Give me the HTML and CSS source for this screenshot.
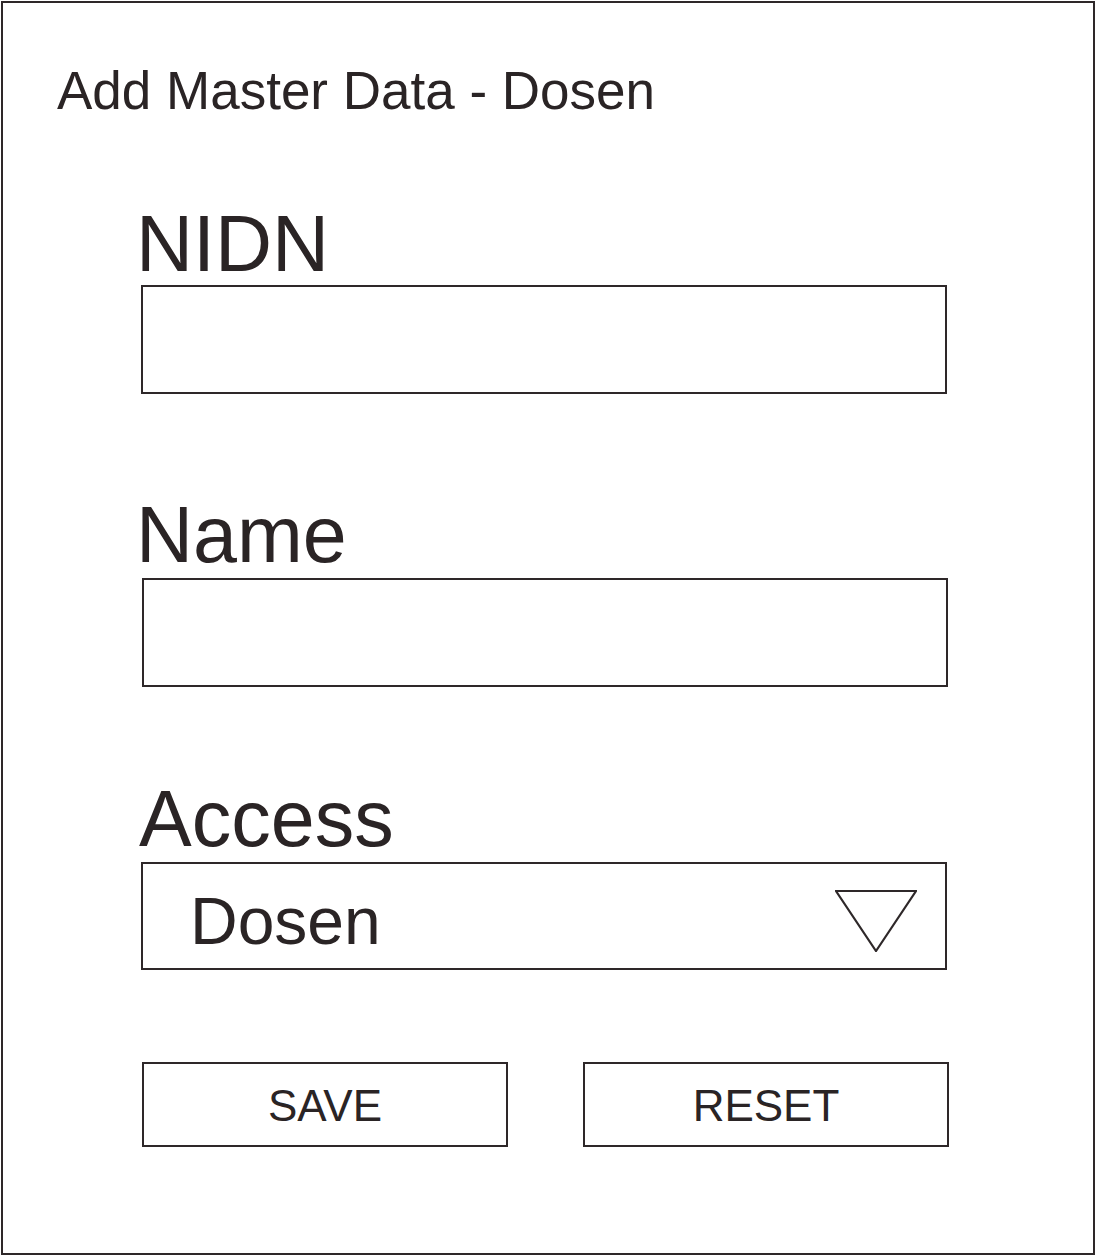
FILE: index.html
```html
<!DOCTYPE html>
<html lang="en">
<head>
<meta charset="utf-8">
<title>Add Master Data - Dosen</title>
<link rel="stylesheet" href="styles.css">
</head>
<body>
<div class="frame">
  <h1 class="title">Add Master Data - Dosen</h1>

  <div class="field field-nidn">
    <label class="label">NIDN</label>
    <div class="input"></div>
  </div>

  <div class="field field-name">
    <label class="label">Name</label>
    <div class="input input-name"></div>
  </div>

  <div class="field field-access">
    <label class="label label-access">Access</label>
    <div class="select">
      <span class="select-value">Dosen</span>
      <svg class="select-arrow" width="82" height="62" viewBox="0 0 82 62" aria-hidden="true">
        <polygon points="1,1 81,1 41,61" fill="none" stroke="#2e2829" stroke-width="2.2" stroke-linejoin="miter"/>
      </svg>
    </div>
  </div>

  <div class="actions">
    <button class="btn">SAVE</button>
    <button class="btn">RESET</button>
  </div>
</div>
</body>
</html>
```

FILE: styles.css
```css
html, body {
  margin: 0;
  padding: 0;
  background: #ffffff;
}

body {
  font-family: "Liberation Sans", Arial, Helvetica, sans-serif;
  color: #2a2425;
}

.frame {
  box-sizing: border-box;
  width: 1094px;
  height: 1254px;
  margin: 1px 0 0 1px;
  border: 2px solid #2e2829;
  padding-top: 61px;
}

.title {
  margin: 0 0 0 54px;
  font-size: 53px;
  font-weight: normal;
  line-height: 53px;
}

.field {
  display: flex;
  flex-direction: column;
  align-items: flex-start;
}

.field-nidn { margin-top: 88px; }
.field-name { margin-top: 102px; }
.field-access { margin-top: 93px; }

.label {
  display: block;
  margin-left: 133px;
  font-size: 79px;
  line-height: 78px;
}

.label-access {
  margin-left: 136px;
}

.input {
  box-sizing: border-box;
  width: 806px;
  height: 109px;
  margin: 2px 0 0 138px;
  border: 2px solid #2e2829;
  background: #fff;
}

.input-name {
  margin: 4px 0 0 139px;
}

.select {
  box-sizing: border-box;
  display: flex;
  align-items: flex-start;
  width: 806px;
  height: 108px;
  margin: 4px 0 0 138px;
  border: 2px solid #2e2829;
  padding: 24px 28px 0 47px;
}

.select-value {
  font-size: 66px;
  line-height: 66px;
}

.select-arrow {
  display: block;
  margin-left: auto;
  margin-top: 2px;
}

.actions {
  display: flex;
  gap: 75px;
  margin: 92px 0 0 139px;
}

.btn {
  box-sizing: border-box;
  width: 366px;
  height: 85px;
  padding: 3px 0 0 0;
  border: 2px solid #2e2829;
  background: #fff;
  color: #2a2425;
  font-family: "Liberation Sans", Arial, Helvetica, sans-serif;
  font-size: 44px;
  line-height: 44px;
  text-align: center;
}
```
